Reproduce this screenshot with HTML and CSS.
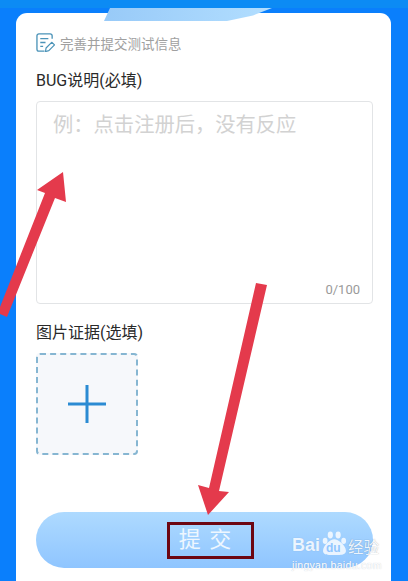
FILE: index.html
```html
<!DOCTYPE html>
<html lang="zh">
<head>
<meta charset="utf-8">
<title>提交测试信息</title>
<link rel="stylesheet" href="styles.css">
</head>
<body>
<main class="page">
  <div class="band"></div>
  <section class="card">
    <div class="heading">
      <svg class="heading-icon" viewBox="0 0 20 20" width="19" height="19" fill="none">
        <path d="M17 6V3A2 2 0 0 0 15 1H3A2 2 0 0 0 1 3V17A2 2 0 0 0 3 19H9" stroke="#4b93b8" stroke-width="1.4"/>
        <path d="M4.500 6H13M4.500 10H10M4.500 14H7.500" stroke="#4b93b8" stroke-width="1.400"/>
        <path d="M10 19.500L10.600 15.800L16.500 9.800L19.500 12.500L13.500 18.600Z" stroke="#4b93b8" stroke-width="1.300" stroke-linejoin="round"/>
      </svg>
      <span>完善并提交测试信息</span>
    </div>
    <label class="label">BUG说明(必填)</label>
    <div class="textarea">
      <div class="placeholder">例&#xFF1A;点击注册后&#xFF0C;没有反应</div>
      <div class="count">0/100</div>
    </div>
    <label class="label label-photo">图片证据(选填)</label>
    <div class="upload">
      <svg viewBox="0 0 38 38" width="38" height="38"><path d="M19 0V38M0 19H38" stroke="#2b8bd3" stroke-width="3"/></svg>
    </div>
    <button class="submit" type="button"><span class="submit-text">提 交</span></button>
  </section>

  <svg class="overlay" viewBox="0 0 408 581" width="408" height="581">
    <defs>
      <linearGradient id="swoosh" x1="0" y1="0" x2="1" y2="0">
        <stop offset="0" stop-color="#98caf8"/>
        <stop offset="1" stop-color="#b2deff"/>
      </linearGradient>
    </defs>
    <path d="M104 21L110 8H272L253 15.500L227 21Z" fill="url(#swoosh)"/>
    <path d="M0 307L45 193L37 190L63 172L66 202L55 198L7 317L0 314Z" fill="#e43a4c"/>
    <path d="M256 283L267 285L219 491L229 492L208 515L198 485L209 488Z" fill="#e43a4c"/>
  </svg>

  <div class="watermark">
    <div class="mark-row">
      <span class="mark-bai">Bai</span>
      <span class="paw-wrap">
        <svg class="paw" viewBox="0 0 24 24" width="25" height="25" fill="#fff">
          <ellipse cx="8" cy="3.800" rx="2.500" ry="3.300"/>
          <ellipse cx="15.500" cy="3.800" rx="2.500" ry="3.300"/>
          <ellipse cx="3" cy="9.500" rx="2.300" ry="2.900"/>
          <ellipse cx="20.800" cy="9.500" rx="2.300" ry="2.900"/>
          <path d="M11.800 8C15.500 8 23 14 23 19C23 24 15 23 11.800 23C8 23 1 24 1 19C1 14 8 8 11.800 8Z"/>
        </svg>
        <span class="paw-du">du</span>
      </span>
      <span class="mark-cn">经验</span>
    </div>
    <div class="mark-url">jingyan.baidu.com</div>
  </div>
</main>
</body>
</html>
```

FILE: styles.css
```css
* { box-sizing: border-box; }
html, body { margin: 0; padding: 0; }
body { font-family: "Roboto", "Noto Sans CJK SC", sans-serif; background: #0a7ffc; }
.page {
  position: relative;
  width: 408px;
  height: 581px;
  overflow: hidden;
  padding: 13px 17px 0 16px;
  background: #0a7ffc;
}
.band {
  position: absolute;
  left: 0;
  right: 0;
  top: 0;
  height: 8px;
  background: #0c8bf4;
}
.card {
  position: relative;
  height: 568px;
  background: #fff;
  border-radius: 11px 11px 0 0;
  padding: 20px 18px 0 20px;
  display: flex;
  flex-direction: column;
}
.heading {
  display: flex;
  align-items: center;
  gap: 5px;
  height: 19px;
  color: #a0a0a0;
  font-size: 13.500px;
}
.heading-icon { flex: none; }
.label {
  display: block;
  margin-top: 18px;
  height: 21px;
  line-height: 21px;
  font-size: 16px;
  color: #2a2a2a;
}
.textarea {
  margin-top: 10px;
  height: 203px;
  border: 1px solid #e2e4e6;
  border-radius: 4px;
  padding: 7px 16px 5px;
  display: flex;
  flex-direction: column;
  justify-content: space-between;
}
.placeholder {
  font-family: "Noto Sans CJK SC", sans-serif;
  font-size: 20.300px;
  line-height: 28px;
  color: #d2d2d2;
}
.count {
  align-self: flex-end;
  margin-right: -4px;
  font-size: 13px;
  line-height: 16px;
  color: #9a9a9a;
}
.label-photo { margin-top: 18px; }
.upload {
  margin-top: 10px;
  width: 102px;
  height: 102px;
  background: #f6f8fb;
  border: 2px dashed #86b6d2;
  border-radius: 4px;
  display: flex;
  align-items: center;
  justify-content: center;
}
.submit {
  margin-top: 57px;
  height: 56px;
  width: 100%;
  border: 0;
  border-radius: 28px;
  padding: 0;
  background: linear-gradient(180deg, #aedaff 0%, #8fc5ff 100%);
  display: flex;
  align-items: center;
  justify-content: center;
  font-family: inherit;
}
.submit-text {
  width: 87px;
  height: 37px;
  margin-left: 12px;
  padding-right: 11px;
  border: 3px solid #6d0612;
  color: #eef7ff;
  font-size: 22px;
  word-spacing: 3px;
  line-height: 30px;
  text-align: center;
  white-space: pre;
}
.overlay {
  position: absolute;
  left: 0;
  top: 0;
  pointer-events: none;
}
.watermark {
  position: absolute;
  left: 292px;
  top: 529px;
  width: 96px;
  color: #fff;
}
.mark-row {
  display: flex;
  align-items: flex-end;
  height: 28px;
  opacity: 0.8;
}
.mark-bai {
  flex: none;
  font-family: "Liberation Sans", sans-serif;
  font-weight: 700;
  font-size: 18px;
  line-height: 24px;
  text-shadow: 0 0 1px rgba(90, 120, 160, 0.4);
}
.paw-wrap {
  position: relative;
  flex: none;
  width: 25px;
  height: 25px;
  margin: 0 1px 1px 2px;
}
.paw { display: block; }
.paw-du {
  position: absolute;
  left: 4px;
  bottom: 2px;
  font-family: "Liberation Sans", sans-serif;
  font-weight: 700;
  font-size: 12px;
  line-height: 12px;
  color: #8fc5ff;
}
.mark-cn {
  flex: none;
  font-family: "Noto Sans CJK SC", sans-serif;
  font-size: 15.500px;
  line-height: 22px;
  white-space: nowrap;
  text-shadow: 0 0 1px rgba(70, 90, 120, 0.7);
}
.mark-url {
  font-family: "Liberation Sans", sans-serif;
  font-size: 10.500px;
  line-height: 12px;
  margin-top: 2px;
  letter-spacing: 0.300px;
  white-space: nowrap;
  text-shadow: 0 0 1px rgba(90, 110, 140, 0.4);
}
```
